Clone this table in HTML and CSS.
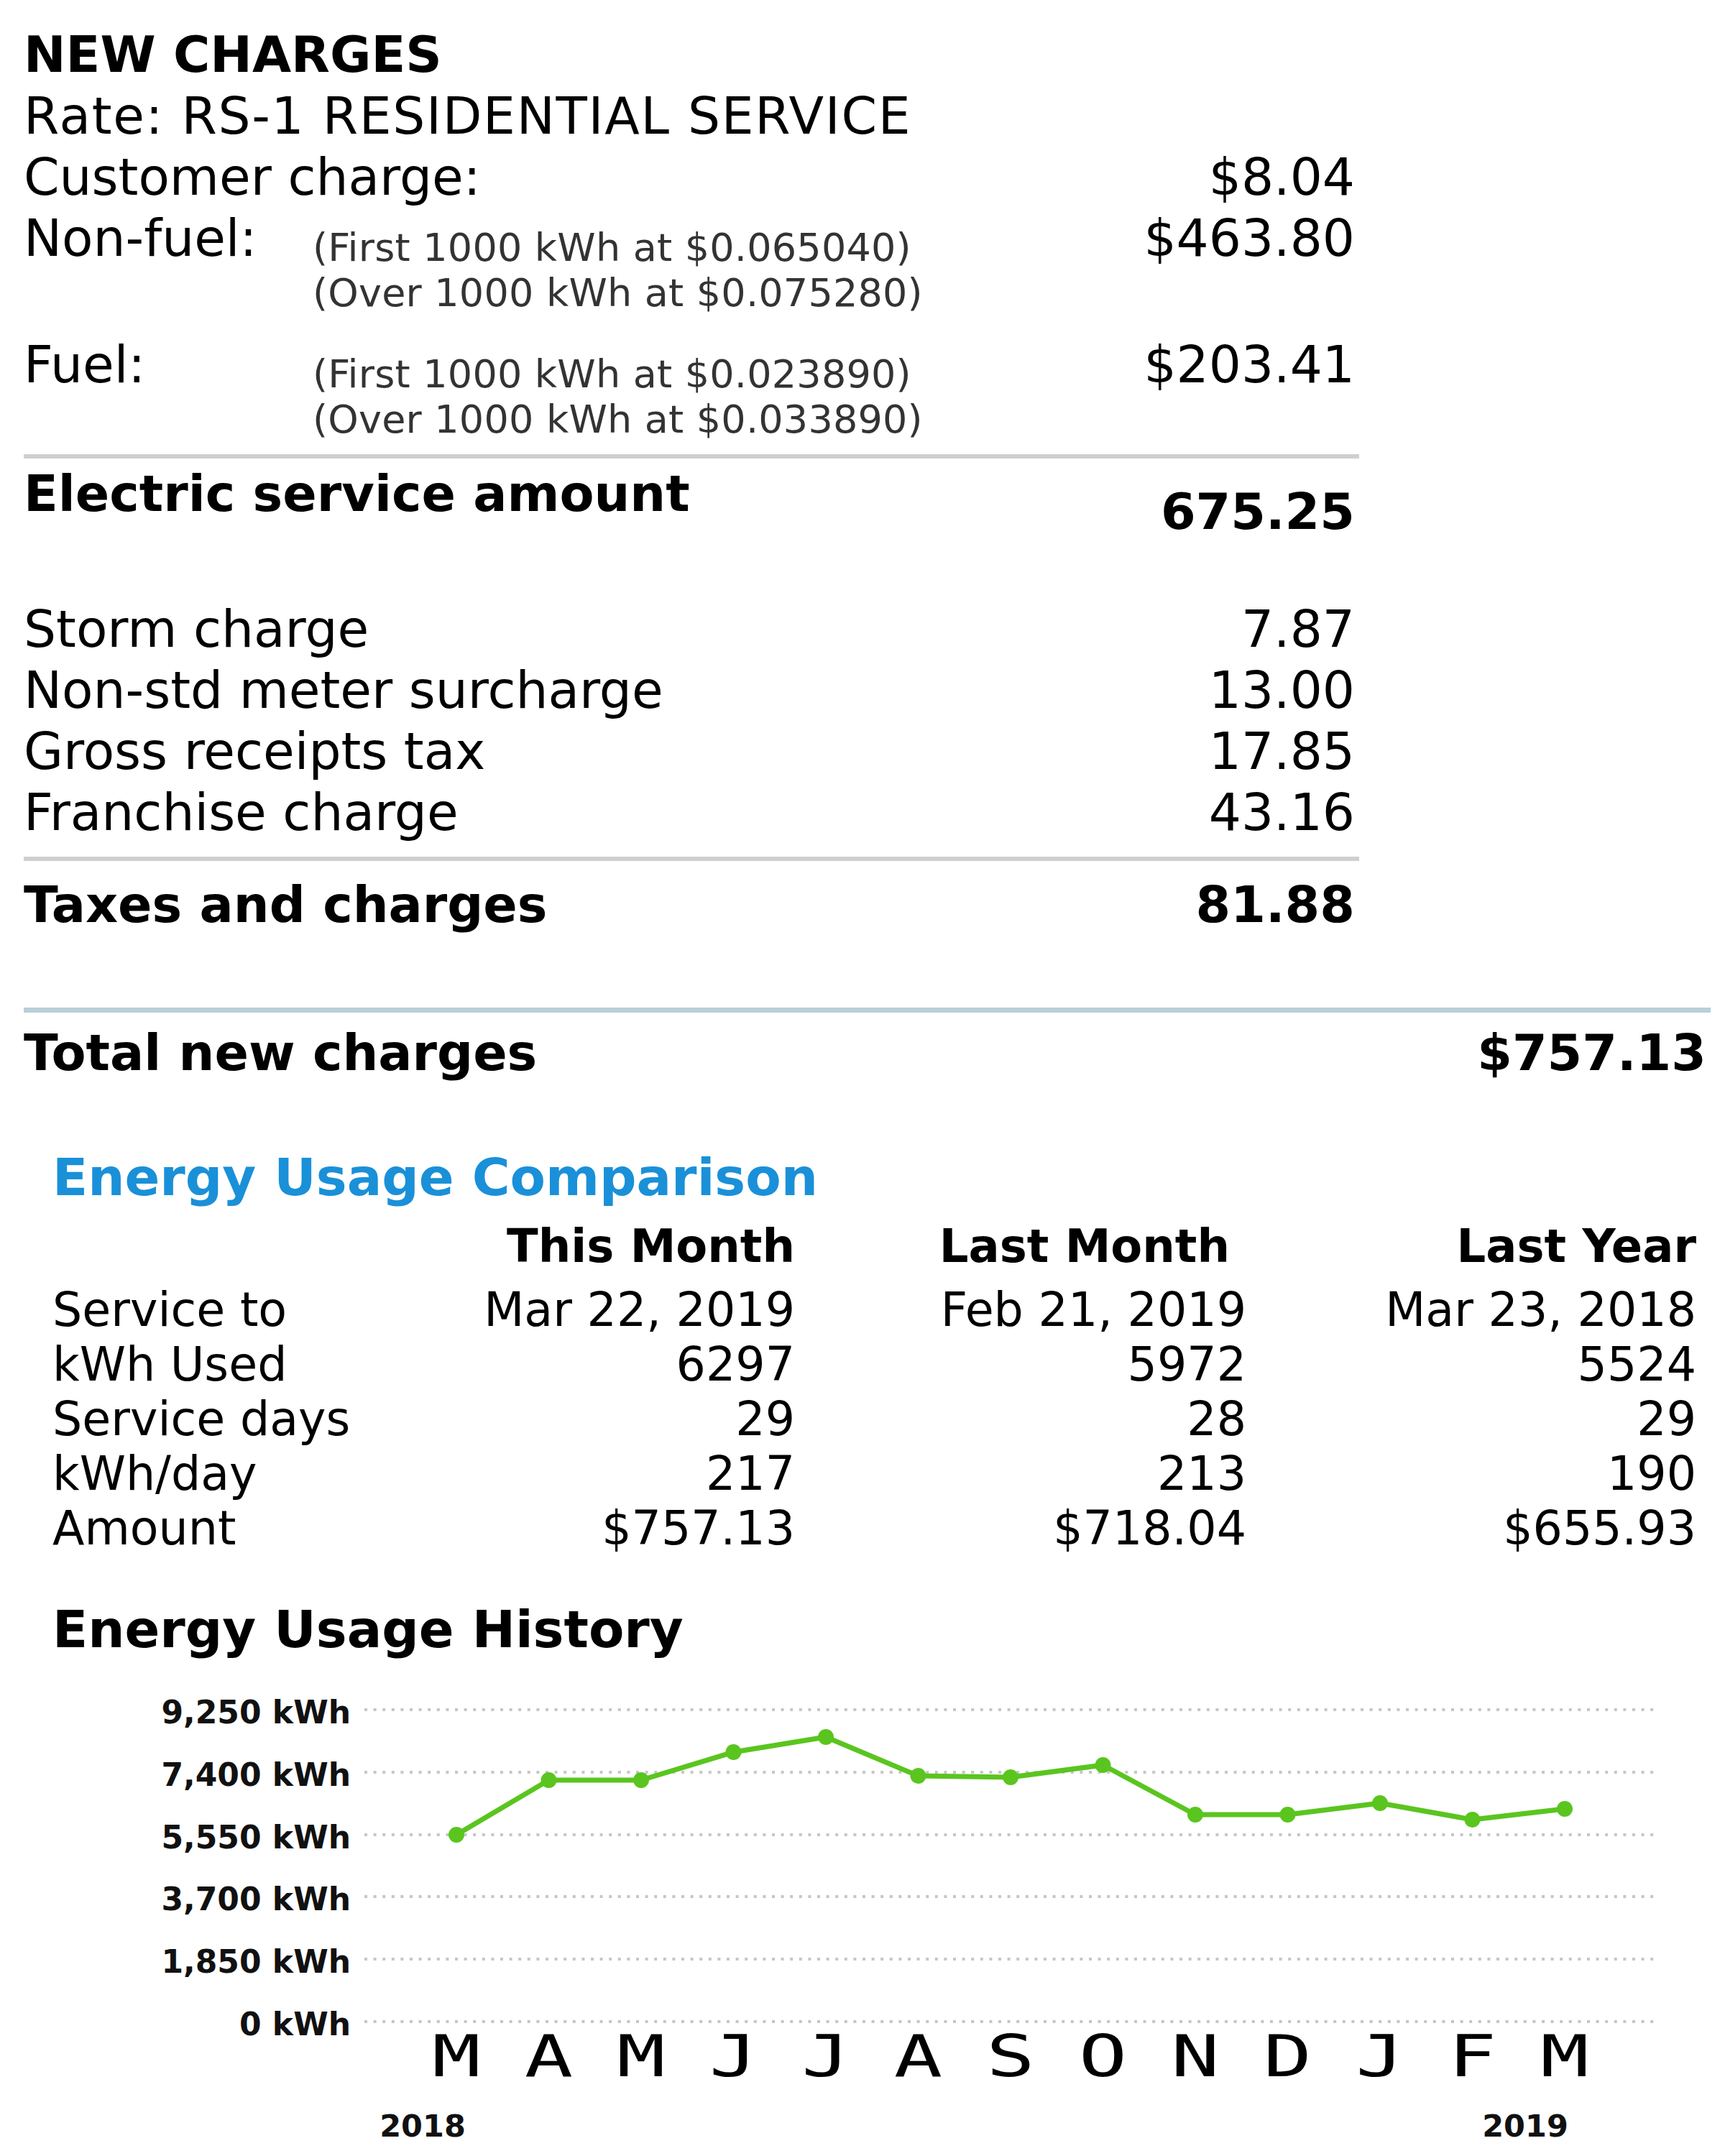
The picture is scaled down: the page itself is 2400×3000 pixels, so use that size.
FILE: index.html
```html
<!DOCTYPE html>
<html lang="en">
<head>
<meta charset="utf-8">
<title>New Charges</title>
<link rel="stylesheet" href="styles.css">
</head>
<body>
<div class="page">
  <section class="charges">
    <div class="heading">NEW CHARGES</div>
    <div class="rate">Rate: RS-1 RESIDENTIAL SERVICE</div>
    <div class="row">
      <span class="label">Customer charge:</span>
      <span class="amount">$8.04</span>
    </div>
    <div class="row detail-row">
      <span class="label">Non-fuel:</span>
      <div class="details">
        <div>(First 1000 kWh at $0.065040)</div>
        <div>(Over 1000 kWh at $0.075280)</div>
      </div>
      <span class="amount">$463.80</span>
    </div>
    <div class="row detail-row">
      <span class="label">Fuel:</span>
      <div class="details">
        <div>(First 1000 kWh at $0.023890)</div>
        <div>(Over 1000 kWh at $0.033890)</div>
      </div>
      <span class="amount">$203.41</span>
    </div>
    <div class="rule"></div>
    <div class="row strong service">
      <span class="label">Electric service amount</span>
      <span class="amount low">675.25</span>
    </div>
    <div class="group">
      <div class="row"><span class="label">Storm charge</span><span class="amount">7.87</span></div>
      <div class="row"><span class="label">Non-std meter surcharge</span><span class="amount">13.00</span></div>
      <div class="row"><span class="label">Gross receipts tax</span><span class="amount">17.85</span></div>
      <div class="row"><span class="label">Franchise charge</span><span class="amount">43.16</span></div>
    </div>
    <div class="rule"></div>
    <div class="row strong taxes">
      <span class="label">Taxes and charges</span>
      <span class="amount">81.88</span>
    </div>
  </section>

  <div class="rule-blue"></div>
  <div class="row strong grand">
    <span class="label">Total new charges</span>
    <span class="amount">$757.13</span>
  </div>

  <section class="comparison">
    <h2 class="title-blue">Energy Usage Comparison</h2>
    <div class="cmp-grid">
      <div class="cmp-head"></div>
      <div class="cmp-head">This Month</div>
      <div class="cmp-head shift">Last Month</div>
      <div class="cmp-head">Last Year</div>

      <div class="cmp-label">Service to</div>
      <div class="cmp-val">Mar 22, 2019</div>
      <div class="cmp-val">Feb 21, 2019</div>
      <div class="cmp-val">Mar 23, 2018</div>

      <div class="cmp-label">kWh Used</div>
      <div class="cmp-val">6297</div>
      <div class="cmp-val">5972</div>
      <div class="cmp-val">5524</div>

      <div class="cmp-label">Service days</div>
      <div class="cmp-val">29</div>
      <div class="cmp-val">28</div>
      <div class="cmp-val">29</div>

      <div class="cmp-label">kWh/day</div>
      <div class="cmp-val">217</div>
      <div class="cmp-val">213</div>
      <div class="cmp-val">190</div>

      <div class="cmp-label">Amount</div>
      <div class="cmp-val">$757.13</div>
      <div class="cmp-val">$718.04</div>
      <div class="cmp-val">$655.93</div>
    </div>
  </section>

  <section class="history">
    <h2 class="title-dark">Energy Usage History</h2>
    <svg class="chart" width="2400" height="690" viewBox="0 2310 2400 690" xmlns="http://www.w3.org/2000/svg">
      <g class="grid">
        <line x1="507" y1="2379" x2="2307" y2="2379"/>
        <line x1="507" y1="2466" x2="2307" y2="2466"/>
        <line x1="507" y1="2553" x2="2307" y2="2553"/>
        <line x1="507" y1="2639" x2="2307" y2="2639"/>
        <line x1="507" y1="2726" x2="2307" y2="2726"/>
        <line x1="507" y1="2813" x2="2307" y2="2813"/>
      </g>
      <g class="ylabels">
        <text x="488" y="2398">9,250 kWh</text>
        <text x="488" y="2485">7,400 kWh</text>
        <text x="488" y="2572">5,550 kWh</text>
        <text x="488" y="2658">3,700 kWh</text>
        <text x="488" y="2745">1,850 kWh</text>
        <text x="488" y="2832">0 kWh</text>
      </g>
      <polyline class="usage" points="635,2553 763.5,2477 892,2477 1020.5,2438 1149,2417 1277.5,2471 1406,2473 1534.5,2456 1663,2525 1791.5,2525 1920,2509 2048.5,2532 2177,2517"/>
      <g class="dots">
        <circle cx="635" cy="2553" r="11"/>
        <circle cx="763.5" cy="2477" r="11"/>
        <circle cx="892" cy="2477" r="11"/>
        <circle cx="1020.5" cy="2438" r="11"/>
        <circle cx="1149" cy="2417" r="11"/>
        <circle cx="1277.5" cy="2471" r="11"/>
        <circle cx="1406" cy="2473" r="11"/>
        <circle cx="1534.5" cy="2456" r="11"/>
        <circle cx="1663" cy="2525" r="11"/>
        <circle cx="1791.5" cy="2525" r="11"/>
        <circle cx="1920" cy="2509" r="11"/>
        <circle cx="2048.5" cy="2532" r="11"/>
        <circle cx="2177" cy="2517" r="11"/>
      </g>
      <g class="months">
        <text transform="translate(635 2889) scale(1.4 1)">M</text>
        <text transform="translate(763.5 2889) scale(1.4 1)">A</text>
        <text transform="translate(892 2889) scale(1.4 1)">M</text>
        <text transform="translate(1020.5 2889) scale(1.4 1)">J</text>
        <text transform="translate(1149 2889) scale(1.4 1)">J</text>
        <text transform="translate(1277.5 2889) scale(1.4 1)">A</text>
        <text transform="translate(1406 2889) scale(1.4 1)">S</text>
        <text transform="translate(1534.5 2889) scale(1.4 1)">O</text>
        <text transform="translate(1663 2889) scale(1.4 1)">N</text>
        <text transform="translate(1791.5 2889) scale(1.4 1)">D</text>
        <text transform="translate(1920 2889) scale(1.4 1)">J</text>
        <text transform="translate(2048.5 2889) scale(1.4 1)">F</text>
        <text transform="translate(2177 2889) scale(1.4 1)">M</text>
      </g>
      <g class="years">
        <text x="588" y="2973">2018</text>
        <text x="2122" y="2973">2019</text>
      </g>
    </svg>
  </section>
</div>
</body>
</html>
```

FILE: styles.css
```css
html, body {
  margin: 0;
  padding: 0;
  background: #ffffff;
}

body {
  font-family: "DejaVu Sans", Verdana, "Liberation Sans", sans-serif;
  color: #000000;
  width: 2400px;
}

.page {
  padding-top: 34px;
}

/* ---------- New charges ---------- */
.charges {
  margin-left: 33px;
  width: 1858px;
  font-size: 71px;
}

.heading {
  font-weight: bold;
  font-size: 70px;
  line-height: 85px;
}

.rate {
  line-height: 85px;
  letter-spacing: 1.7px;
}

.row {
  display: flex;
  align-items: flex-start;
  line-height: 85px;
}

.row .label {
  width: 402px;
  flex: none;
  white-space: nowrap;
}

.row .amount {
  margin-left: auto;
  padding-right: 6px;
  text-align: right;
  white-space: nowrap;
}

.detail-row {
  margin-bottom: 26px;
}

.detail-row:nth-of-type(5) {
  margin-bottom: 0;
}

.details {
  margin-top: 24px;
  font-size: 54px;
  line-height: 63px;
  letter-spacing: 0.2px;
  color: #333333;
  white-space: nowrap;
}

.rule {
  height: 6px;
  background: #cfcfcf;
  margin-top: 17px;
}

.strong {
  font-weight: bold;
  font-size: 70px;
}

.service {
  margin-top: 7px;
}

.service .label,
.taxes .label,
.grand .label {
  width: auto;
}

.amount.low {
  padding-top: 25px;
}

.group {
  margin-top: 78px;
}

.group + .rule {
  margin-top: 19px;
}

.taxes {
  margin-top: 19px;
}

/* ---------- Total ---------- */
.rule-blue {
  margin: 100px 0 0 33px;
  width: 2347px;
  height: 7px;
  background: #b9cfd7;
}

.grand {
  margin: 14px 0 0 33px;
  width: 2347px;
}

/* ---------- Comparison ---------- */
.comparison {
  margin: 88px 0 0 73px;
}

.title-blue,
.title-dark {
  margin: 0;
  font-size: 72px;
  font-weight: bold;
  line-height: 85px;
}

.title-blue {
  color: #1a90d8;
}

.cmp-grid {
  display: grid;
  grid-template-columns: 500px 533px 628px 626px;
  grid-template-rows: 89px;
  grid-auto-rows: 76px;
  margin-top: 15px;
  font-size: 65px;
  line-height: 76px;
}

.cmp-head {
  font-weight: bold;
  font-size: 64px;
  line-height: 77px;
  height: 77px;
  margin-bottom: 12px;
  text-align: right;
  white-space: nowrap;
}

.cmp-head.shift {
  padding-right: 23px;
}

.cmp-label {
  white-space: nowrap;
}

.cmp-val {
  text-align: right;
  white-space: nowrap;
}

/* ---------- History ---------- */
.history {
  margin-top: 60px;
}

.history .title-dark {
  margin-left: 73px;
}

.chart {
  display: block;
}

.grid line {
  stroke: #c6c6c6;
  stroke-width: 4;
  stroke-dasharray: 4 8.6;
}

.ylabels text {
  font-family: "DejaVu Sans", Verdana, sans-serif;
  font-weight: bold;
  font-size: 44px;
  text-anchor: end;
  fill: #111111;
}

.usage {
  fill: none;
  stroke: #5ac51f;
  stroke-width: 7;
  stroke-linejoin: round;
}

.dots circle {
  fill: #5ac51f;
}

.months text {
  font-family: "DejaVu Sans Mono", "Liberation Mono", monospace;
  font-size: 80px;
  text-anchor: middle;
  fill: #000000;
}

.years text {
  font-family: "DejaVu Sans", Verdana, sans-serif;
  font-weight: bold;
  font-size: 43px;
  text-anchor: middle;
  fill: #111111;
}
```
